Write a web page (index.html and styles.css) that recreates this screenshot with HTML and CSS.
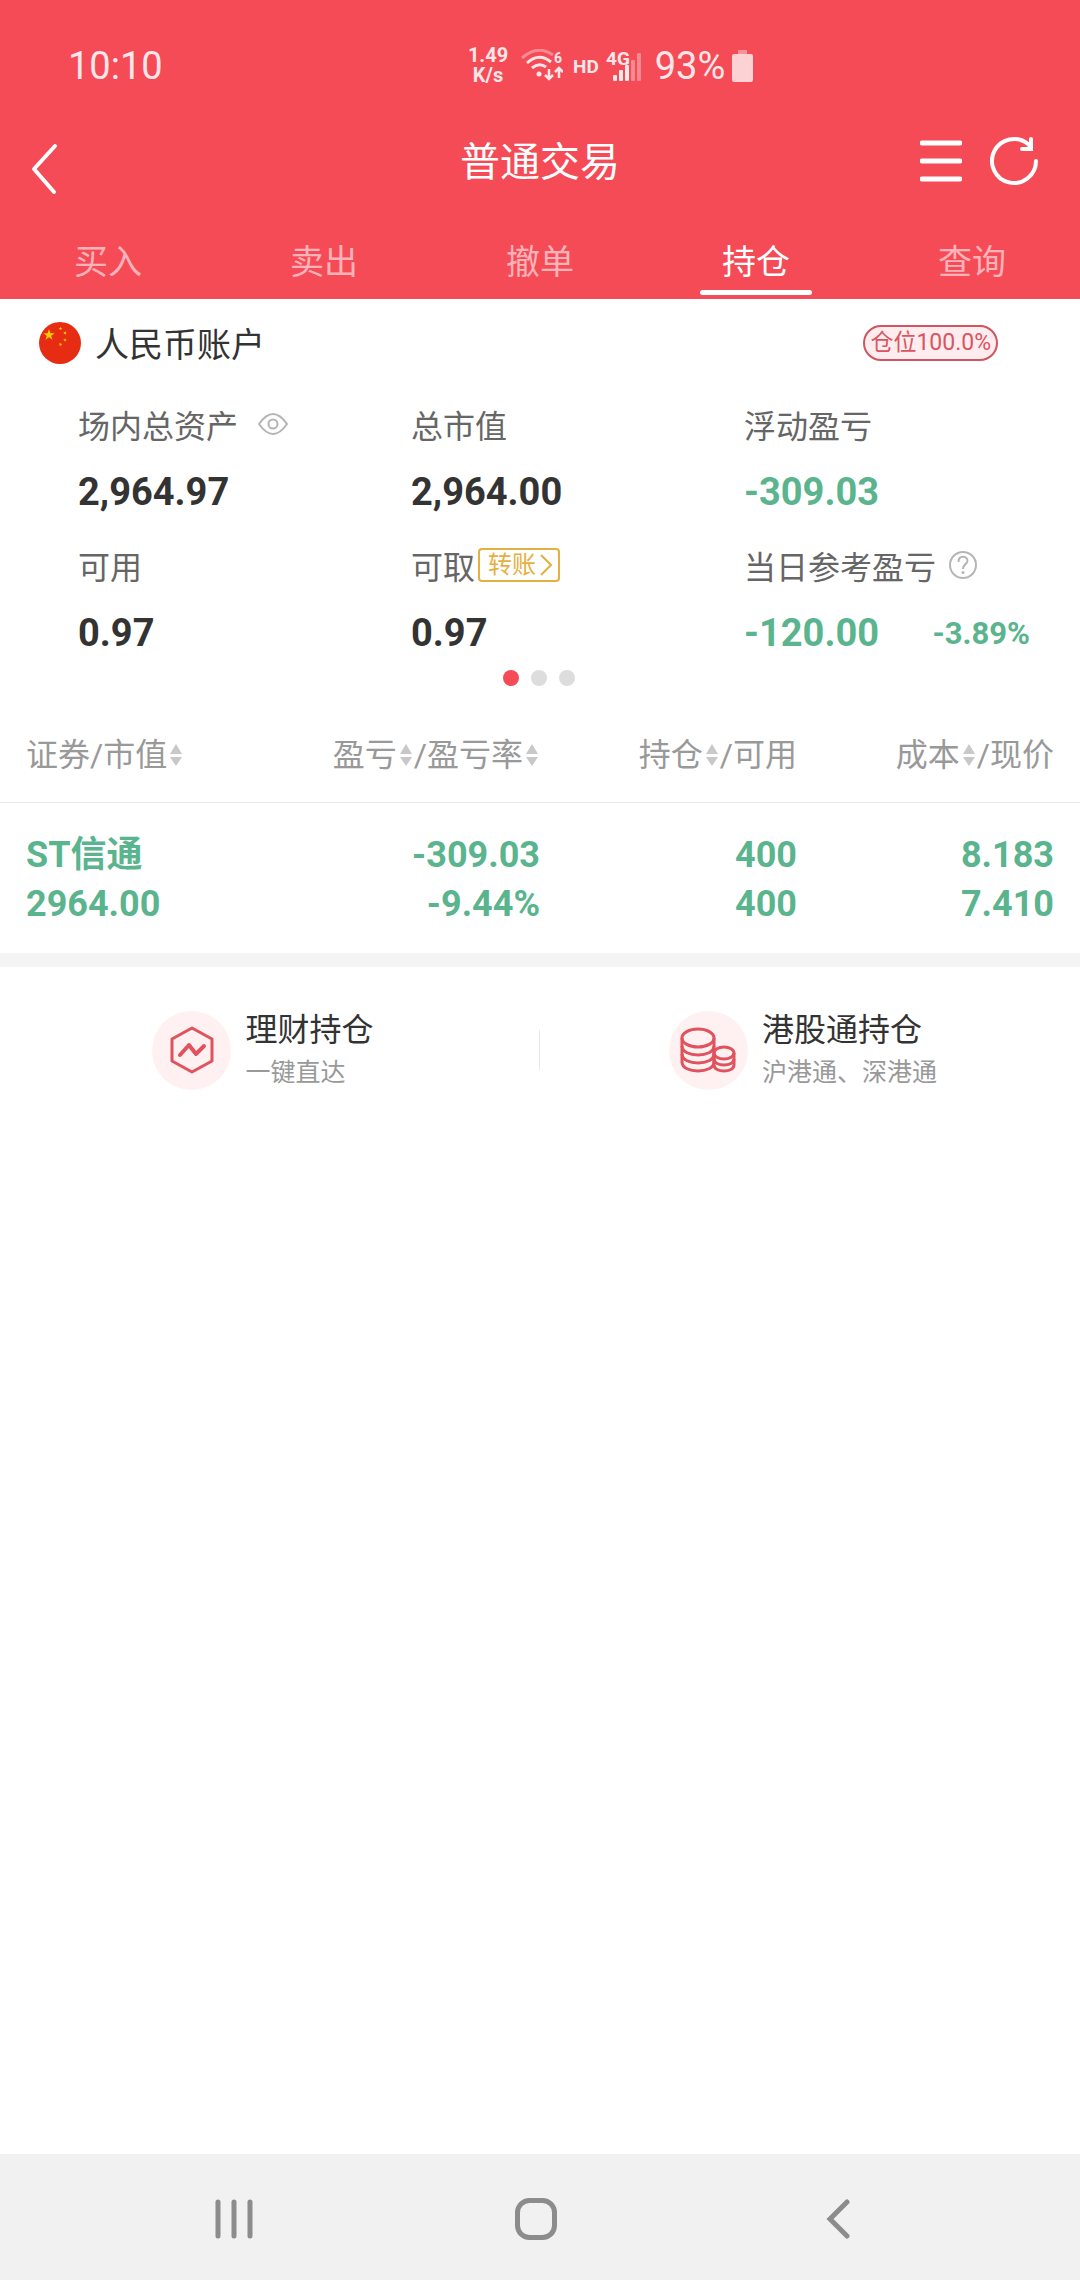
FILE: index.html
```html
<!DOCTYPE html>
<html lang="zh-CN">
<head>
  <meta charset="utf-8">
  <meta name="viewport" content="width=device-width">
  <title>普通交易</title>
  <link rel="stylesheet" href="styles.css">
</head>
<body>
  <header class="header">
    <div class="status-bar">
      <span class="clock">10:10</span>
      <div class="status-icons">
        <div class="net-speed">
          <span>1.49</span>
          <span>K/s</span>
        </div>
        <svg class="wifi" width="42" height="34" viewBox="0 0 42 34" fill="none" stroke="#ffe6e8" stroke-width="3">
          <path d="M1 9Q17-5 32 6" opacity=".4"/>
          <path d="M6 14Q18 3 30 13"/>
          <path d="M11 19Q18 13 25 18"/>
          <circle cx="18" cy="25" r="2.500" fill="#ffe6e8" stroke="none"/>
          <path d="M28 20v10M24 26l4 4 4-4M38 29V20M34 23l4-4 4 4" stroke-width="2.500"/>
          <text x="33" y="14" font-size="14" font-weight="700" fill="#ffe6e8" stroke="none">6</text>
        </svg>
        <span class="hd">HD</span>
        <svg class="signal" width="38" height="40" viewBox="0 0 38 40" fill="#ffe6e8">
          <text x="1" y="19" font-size="19" font-weight="700">4G</text>
          <rect x="8" y="29" width="4" height="6" rx="1"/>
          <rect x="14" y="24" width="4" height="11" rx="1"/>
          <rect x="20" y="19" width="4" height="16" rx="1"/>
          <rect x="26" y="14" width="4" height="21" rx="1" opacity=".4"/>
          <rect x="32" y="7" width="4" height="28" rx="1" opacity=".4"/>
        </svg>
        <span class="battery-level">93%</span>
        <svg width="21" height="32" viewBox="0 0 21 32" fill="#fff">
          <rect x="6" y="0" width="9" height="4" opacity=".4"/>
          <rect x="0" y="4" width="21" height="28" rx="2" opacity=".75"/>
        </svg>
      </div>
    </div>

    <div class="title-bar">
      <button class="icon-btn back" aria-label="返回">
        <svg width="28" height="82" viewBox="0 0 28 82" fill="none" stroke="#fff" stroke-width="4" stroke-linecap="round" stroke-linejoin="round">
          <path d="M25 26L4 49L24 72"/>
        </svg>
      </button>
      <h1>普通交易</h1>
      <div class="title-actions">
        <button class="icon-btn" aria-label="菜单">
          <svg width="42" height="48" viewBox="0 0 42 48" stroke="#fff" stroke-width="5" stroke-linecap="round">
            <path d="M2 6h38M2 24h38M2 42h38"/>
          </svg>
        </button>
        <button class="icon-btn" aria-label="刷新">
          <svg width="48" height="50" viewBox="0 0 48 50" fill="none" stroke="#fff" stroke-width="4" stroke-linecap="round">
            <path d="M46 25A22 22 0 1 1 38 8L41 11"/>
            <path d="M41 3V13H32"/>
          </svg>
        </button>
      </div>
    </div>

    <nav class="tabs">
      <a href="#buy">买入</a>
      <a href="#sell">卖出</a>
      <a href="#cancel">撤单</a>
      <a href="#position" class="active">持仓</a>
      <a href="#query">查询</a>
    </nav>
  </header>

  <main>
    <section class="account">
      <div class="account-head">
        <svg width="42" height="42" viewBox="0 0 42 42">
          <defs>
            <path id="star" d="M0-1L.225-.309H.951L.363.118.588.809 0 .382-.588.809-.363.118-.951-.309H-.225Z"/>
          </defs>
          <circle cx="21" cy="21" r="21" fill="#e62d14"/>
          <g fill="#fc0">
            <use href="#star" transform="translate(10 13) scale(6)"/>
            <use href="#star" transform="translate(21.500 6.500) scale(2)"/>
            <use href="#star" transform="translate(26 11) rotate(20) scale(2)"/>
            <use href="#star" transform="translate(26 18) scale(2)"/>
            <use href="#star" transform="translate(21.500 22.500) rotate(20) scale(2)"/>
          </g>
        </svg>
        <h2>人民币账户</h2>
        <span class="badge">仓位100.0%</span>
      </div>

      <div class="summary">
        <div class="item">
          <div class="label">场内总资产
            <button class="icon-btn eye" aria-label="隐藏金额">
              <svg width="30" height="22" viewBox="0 0 30 22" fill="none" stroke="#b5b5b5" stroke-width="2">
                <path d="M1 11Q15-9 29 11Q15 31 1 11Z"/>
                <circle cx="15" cy="11" r="4.500"/>
              </svg>
            </button>
          </div>
          <div class="value">2,964.97</div>
        </div>
        <div class="item">
          <div class="label">总市值</div>
          <div class="value">2,964.00</div>
        </div>
        <div class="item">
          <div class="label">浮动盈亏</div>
          <div class="value down">-309.03</div>
        </div>
        <div class="item">
          <div class="label">可用</div>
          <div class="value">0.97</div>
        </div>
        <div class="item">
          <div class="label">可取
            <button class="transfer">转账
              <svg width="12" height="22" viewBox="0 0 12 22" fill="none" stroke="#e5b041" stroke-width="2">
                <path d="M1 1L11 11L1 21"/>
              </svg>
            </button>
          </div>
          <div class="value">0.97</div>
        </div>
        <div class="item">
          <div class="label">当日参考盈亏
            <button class="icon-btn help" aria-label="说明">
              <svg width="28" height="28" viewBox="0 0 28 28" fill="none" stroke="#b5b5b5" stroke-width="2">
                <circle cx="14" cy="14" r="13"/>
                <path d="M9.500 11C9.500 4 18.500 4.500 18.500 10C18.500 13 14 13 14 18"/>
                <circle cx="14" cy="21.500" r="1.500" fill="#b5b5b5" stroke="none"/>
              </svg>
            </button>
          </div>
          <div class="value down">-120.00 <span class="percent">-3.89%</span></div>
        </div>
      </div>

      <div class="dots">
        <span class="dot on"></span>
        <span class="dot"></span>
        <span class="dot"></span>
      </div>
    </section>

    <svg width="0" height="0" class="defs">
      <symbol id="sort" viewBox="0 0 12 22">
        <path d="M6 0L12 10H0ZM6 22L12 13H0Z" fill="#c8c8c8"/>
      </symbol>
    </svg>

    <table class="positions">
      <thead>
        <tr>
          <th><button>证券/市值<svg class="sort"><use href="#sort"/></svg></button></th>
          <th><button>盈亏<svg class="sort"><use href="#sort"/></svg></button>/<button>盈亏率<svg class="sort"><use href="#sort"/></svg></button></th>
          <th><button>持仓<svg class="sort"><use href="#sort"/></svg></button>/可用</th>
          <th><button>成本<svg class="sort"><use href="#sort"/></svg></button>/现价</th>
        </tr>
      </thead>
      <tbody>
        <tr>
          <td>ST信通<br>2964.00</td>
          <td>-309.03<br>-9.44%</td>
          <td>400<br>400</td>
          <td>8.183<br>7.410</td>
        </tr>
      </tbody>
    </table>

    <div class="entries">
      <a class="entry" href="#wealth">
        <span class="entry-icon">
          <svg width="44" height="48" viewBox="0 0 44 48" fill="none" stroke="#e0525d" stroke-width="3" stroke-linejoin="round" stroke-linecap="round">
            <path d="M22 2L42 13V35L22 46L2 35V13Z"/>
            <path d="M10 29L19 19L26 28L34 20" stroke-width="4"/>
          </svg>
        </span>
        <span class="entry-text">
          <strong>理财持仓</strong>
          <small>一键直达</small>
        </span>
      </a>
      <a class="entry" href="#hk">
        <span class="entry-icon">
          <svg width="56" height="46" viewBox="0 0 56 46" fill="none" stroke="#e0525d" stroke-width="3">
            <ellipse cx="18" cy="11" rx="16" ry="9"/>
            <path d="M2 11V35C2 47 34 47 34 35V11"/>
            <path d="M2 19C2 31 34 31 34 19M2 27C2 39 34 39 34 27"/>
            <ellipse cx="44" cy="26" rx="10" ry="6"/>
            <path d="M34 26V38C34 46 54 46 54 38V26"/>
            <path d="M34 32C34 40 54 40 54 32"/>
          </svg>
        </span>
        <span class="entry-text">
          <strong>港股通持仓</strong>
          <small>沪港通、深港通</small>
        </span>
      </a>
    </div>
  </main>

  <footer class="nav-bar">
    <button class="icon-btn" aria-label="最近任务">
      <svg width="40" height="42" viewBox="0 0 40 42" stroke="#8c8c8c" stroke-width="5" stroke-linecap="round">
        <path d="M4 4V38M20 4V38M36 4V38"/>
      </svg>
    </button>
    <button class="icon-btn" aria-label="主页">
      <svg width="42" height="42" viewBox="0 0 42 42" fill="none" stroke="#8c8c8c" stroke-width="5">
        <rect x="2.500" y="2.500" width="37" height="37" rx="12"/>
      </svg>
    </button>
    <button class="icon-btn" aria-label="返回">
      <svg width="24" height="42" viewBox="0 0 24 42" fill="none" stroke="#8c8c8c" stroke-width="5" stroke-linecap="round">
        <path d="M21 4L4 21L21 38"/>
      </svg>
    </button>
  </footer>
</body>
</html>
```

FILE: styles.css
```css
* {
  box-sizing: border-box;
}

body {
  margin: 0;
  min-height: 100vh;
  display: flex;
  flex-direction: column;
  background: #fff;
  color: #333;
  font-family: Roboto, "Noto Sans CJK SC", sans-serif;
  font-size: 32px;
}

button {
  margin: 0;
  padding: 0;
  border: none;
  background: none;
  color: inherit;
  font: inherit;
  cursor: pointer;
}

a {
  color: inherit;
  text-decoration: none;
}

svg {
  display: block;
  flex: none;
}

h1,
h2 {
  margin: 0;
  font-weight: 400;
}

.icon-btn {
  display: flex;
  align-items: center;
  justify-content: center;
}

.defs {
  position: absolute;
}

/* header */
.header {
  background: #f54b57;
  color: #fff;
}

.status-bar {
  display: grid;
  grid-template-columns: 398px 1fr;
  align-items: center;
  height: 120px;
  padding: 12px 0 0 68px;
  font-size: 38px;
  color: #ffe6e8;
}

.status-icons {
  display: flex;
  align-items: center;
}

.net-speed {
  display: flex;
  flex-direction: column;
  align-items: center;
  width: 44px;
  margin-top: -2px;
  font-size: 20px;
  line-height: 20px;
  font-weight: 700;
}

.wifi {
  margin-left: 11px;
}

.hd {
  margin: 0 6px 0 10px;
  font-size: 19px;
  font-weight: 700;
}

.battery-level {
  margin: 0 7px 0 12px;
}

.title-bar {
  display: grid;
  grid-template-columns: 1fr auto 1fr;
  align-items: center;
  height: 101px;
  padding: 0 42px 19px 30px;
}

.title-bar h1 {
  padding: 0 0 5px 12px;
  font-size: 40px;
}

.back {
  justify-self: start;
}

.title-actions {
  display: flex;
  align-items: center;
  justify-content: flex-end;
  gap: 28px;
}

.tabs {
  display: grid;
  grid-template-columns: repeat(5, 1fr);
}

.tabs a {
  display: flex;
  flex-direction: column;
  align-items: center;
  height: 78px;
  font-size: 34px;
  line-height: 82px;
  color: #ffb3b9;
}

.tabs .active {
  color: #fff;
}

.tabs .active::after {
  content: "";
  flex: none;
  width: 112px;
  height: 5px;
  margin-top: -13px;
  border-radius: 3px;
  background: #fff;
}

/* account summary */
.account-head {
  display: flex;
  align-items: center;
  height: 93px;
  padding: 0 82px 5px 39px;
}

.account-head h2 {
  margin-left: 14px;
  padding-bottom: 2px;
  font-size: 34px;
}

.badge {
  margin-left: auto;
  padding: 0 5px;
  border: 2px solid #d05560;
  border-radius: 18px;
  background: #ffecee;
  color: #d95560;
  font-size: 23px;
  line-height: 32px;
}

.summary {
  display: grid;
  grid-template-columns: repeat(3, 1fr);
  row-gap: 9px;
  padding: 0 3px 0 78px;
}

.label {
  display: flex;
  align-items: center;
  height: 66px;
  padding-bottom: 3px;
  color: #666;
}

.value {
  display: flex;
  align-items: center;
  justify-content: space-between;
  height: 66px;
  padding: 2px 47px 0 0;
  font-size: 38px;
  font-weight: 700;
}

.down {
  color: #5ab48e;
}

.percent {
  font-size: 31px;
}

.eye {
  margin-left: 20px;
}

.help {
  margin-left: 13px;
}

.transfer {
  display: flex;
  align-items: center;
  gap: 4px;
  height: 34px;
  margin-left: 3px;
  padding: 0 6px 0 8px;
  border: 2px solid #e5b041;
  border-radius: 4px;
  color: #e5b041;
  font-size: 24px;
  line-height: 30px;
}

.dots {
  display: flex;
  justify-content: center;
  gap: 12px;
  padding: 5px 2px 19px 0;
}

.dot {
  width: 16px;
  height: 16px;
  border-radius: 50%;
  background: #ddd;
}

.dot.on {
  background: #f54b57;
}

/* positions */
.positions {
  width: 100%;
  table-layout: fixed;
  border-collapse: separate;
  border-spacing: 0;
  border-bottom: 14px solid #f4f4f4;
}

.positions th,
.positions td {
  padding: 0;
  text-align: right;
}

.positions th:first-child,
.positions td:first-child {
  padding-left: 26px;
  text-align: left;
}

.positions th:nth-child(3),
.positions td:nth-child(3) {
  padding-right: 13px;
}

.positions th:last-child,
.positions td:last-child {
  padding-right: 26px;
}

.positions th {
  height: 98px;
  padding-bottom: 4px;
  border-bottom: 1px solid #e8e8e8;
  color: #999;
  font-weight: 400;
  white-space: nowrap;
}

.positions td {
  height: 150px;
  padding-top: 4px;
  color: #5ab48e;
  font-size: 36px;
  line-height: 49px;
  font-weight: 700;
}

.sort {
  display: inline-block;
  width: 12px;
  height: 22px;
  margin: 0 2px 0 3px;
}

/* entries */
.entries {
  display: grid;
  grid-template-columns: 1fr 1fr;
  padding: 40px 0;
}

.entry {
  display: flex;
  align-items: center;
  justify-content: center;
  gap: 14px;
  padding-right: 14px;
}

.entry:first-child {
  background: linear-gradient(#e8e8e8, #e8e8e8) right center / 1px 40px no-repeat;
}

.entry-icon {
  display: flex;
  align-items: center;
  justify-content: center;
  width: 79px;
  height: 79px;
  border-radius: 50%;
  background: #fff1f1;
}

.entry-text {
  display: flex;
  flex-direction: column;
}

.entry-text strong {
  font-weight: 400;
  line-height: 46px;
}

.entry-text small {
  color: #999;
  font-size: 25px;
  line-height: 40px;
}

/* system navigation */
.nav-bar {
  display: grid;
  grid-template-columns: repeat(3, 1fr);
  height: 126px;
  margin-top: auto;
  padding: 3px 91px 0 83px;
  background: #f1f1f1;
}
```
